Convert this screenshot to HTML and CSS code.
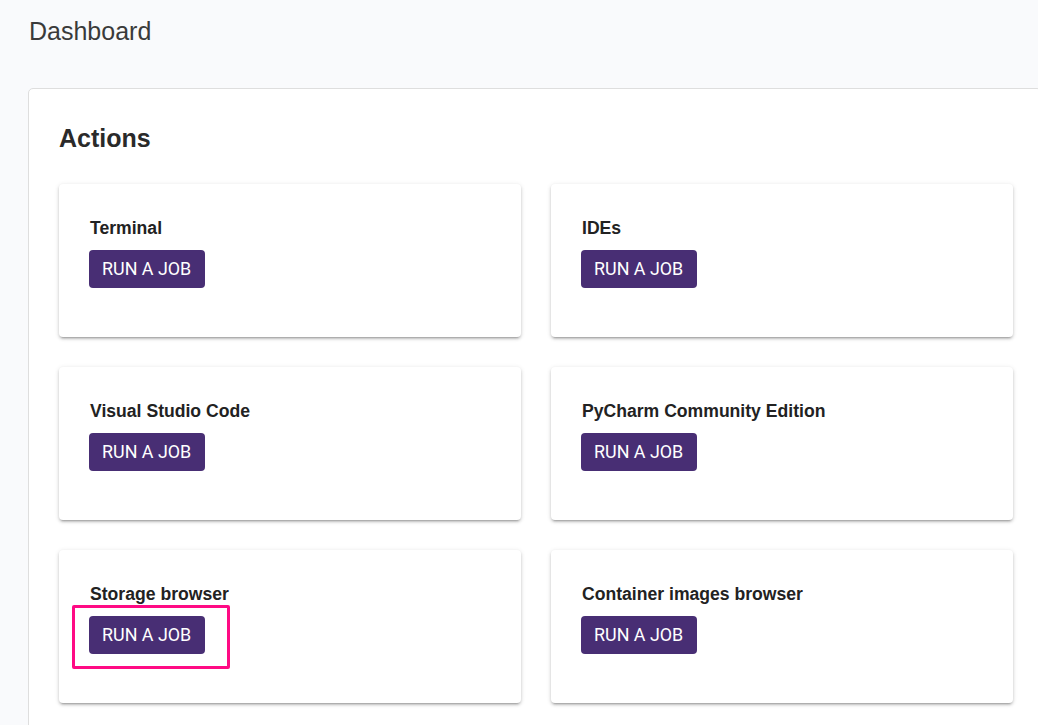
FILE: index.html
```html
<!DOCTYPE html>
<html lang="en">
<head>
<meta charset="utf-8">
<title>Dashboard</title>
<link rel="stylesheet" href="styles.css">
</head>
<body>
<main class="page">
  <h1 class="page-title">Dashboard</h1>
  <section class="panel">
    <h2 class="panel-title">Actions</h2>
    <div class="grid">
      <div class="card">
        <h3 class="card-title">Terminal</h3>
        <button class="btn">RUN A JOB</button>
      </div>
      <div class="card">
        <h3 class="card-title">IDEs</h3>
        <button class="btn">RUN A JOB</button>
      </div>
      <div class="card">
        <h3 class="card-title">Visual Studio Code</h3>
        <button class="btn">RUN A JOB</button>
      </div>
      <div class="card">
        <h3 class="card-title">PyCharm Community Edition</h3>
        <button class="btn">RUN A JOB</button>
      </div>
      <div class="card">
        <h3 class="card-title">Storage browser</h3>
        <button class="btn">RUN A JOB</button>
        <span class="highlight"></span>
      </div>
      <div class="card">
        <h3 class="card-title">Container images browser</h3>
        <button class="btn">RUN A JOB</button>
      </div>
    </div>
  </section>
</main>
</body>
</html>
```

FILE: styles.css
```css
html, body {
  margin: 0;
  padding: 0;
  overflow: hidden;
  background: #f9fafc;
}

body {
  font-family: "Liberation Sans", Arial, sans-serif;
  color: #222;
}

.page {
  padding: 16px 0 0 28px;
}

.page-title {
  margin: 0 0 42px 1px;
  font-size: 25px;
  line-height: 30px;
  font-weight: normal;
  color: #3a3a3a;
}

.panel {
  width: 1014px;
  box-sizing: border-box;
  background: #fff;
  border: 1px solid #dedede;
  border-radius: 5px;
  padding: 34px 30px 30px 30px;
}

.panel-title {
  margin: 0 0 31px 0;
  font-size: 25px;
  line-height: 30px;
  font-weight: bold;
  color: #2a2a2a;
}

.grid {
  display: grid;
  grid-template-columns: 462px 462px;
  grid-auto-rows: 153px;
  gap: 30px;
}

.card {
  position: relative;
  background: #fff;
  border-radius: 4px;
  box-sizing: border-box;
  padding: 34px 30px 30px 30px;
  box-shadow: 0 3px 2px -2px rgba(0,0,0,0.22), 0 2px 3px 0 rgba(0,0,0,0.15), 0 1px 5px 0 rgba(0,0,0,0.12);
}

.card-title {
  margin: 0 0 12px 1px;
  font-size: 17.6px;
  line-height: 20px;
  font-weight: bold;
  color: #222;
}

.btn {
  display: block;
  height: 38px;
  padding: 0 14px 0 13px;
  border: 0;
  border-radius: 4px;
  background: #482e74;
  color: #fff;
  font-family: Roboto, "Liberation Sans", sans-serif;
  font-size: 17.9px;
  line-height: 38px;
  letter-spacing: 0;
  cursor: pointer;
}

.highlight {
  position: absolute;
  left: 13px;
  top: 55px;
  width: 158px;
  height: 64px;
  box-sizing: border-box;
  border: 3px solid #ff0a84;
  border-radius: 2px;
  pointer-events: none;
}
```
